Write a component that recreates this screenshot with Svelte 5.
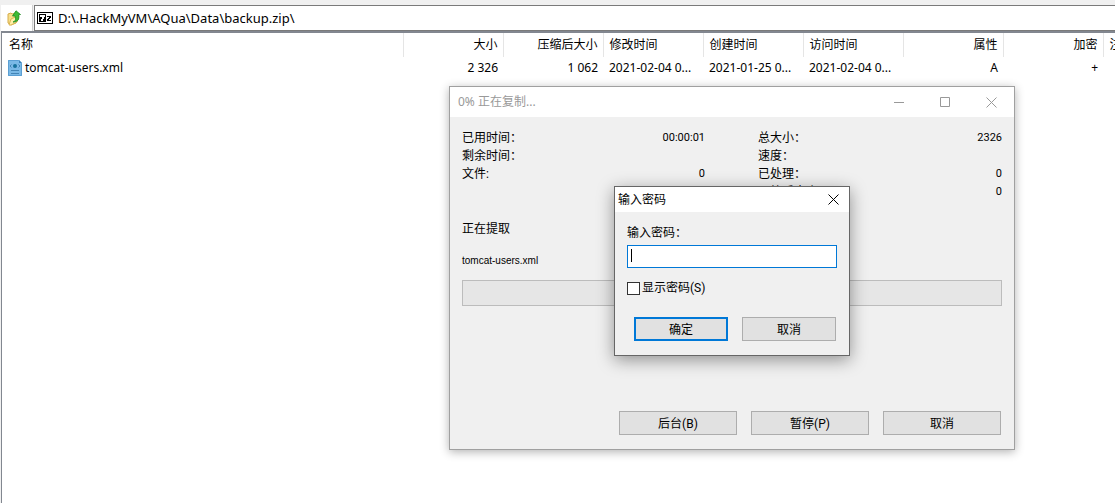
<script>
  const columns = [
    { label: '名称', value: 'tomcat-users.xml', icon: true },
    { label: '大小', value: '2 326', right: true },
    { label: '压缩后大小', value: '1 062', right: true },
    { label: '修改时间', value: '2021-02-04 0...' },
    { label: '创建时间', value: '2021-01-25 0...' },
    { label: '访问时间', value: '2021-02-04 0...' },
    { label: '属性', value: 'A', right: true },
    { label: '加密', value: '+', right: true },
    { label: '注释', value: '' }
  ];
  const left = [['已用时间：', '00:00:01'], ['剩余时间：', ''], ['文件:', '0']];
  const right = [['总大小：', '2326'], ['速度：', ''], ['已处理：', '0'], ['压缩后大小：', '0']];
  let path = $state('D:\\.HackMyVM\\AQua\\Data\\backup.zip\\');
  let password = $state('');
  let shown = $state(false);
</script>

<div class="app">
  <div class="toolbar">
    <button class="up" aria-label="Up">
      <svg width="15" height="16" viewBox="0 0 15 16">
        <path d="M1 4l3-1 1 1 4-1v10l-5 2-3-2z" fill="#f7df8b" stroke="#d6ac4a" />
        <path d="M2 15l2-6 2-1 6-2-2 6-6 3z" fill="#fff0a8" stroke="#dcb654" />
        <path d="M6 12c3-1 3-3 2-6H5.500L9 .8 13.500 4.500 11.500 5c1.200 4-.5 7-5.500 7z" fill="#3dbb35" stroke="#1c8a20" stroke-width=".8" />
      </svg>
    </button>
    <div class="address">
      <svg width="16" height="12" viewBox="0 0 16 12" shape-rendering="crispEdges">
        <path d="M0 0h16v12H0z" />
        <path d="M1 1h14v10H1z" fill="#fff" />
        <path d="M2 2h7v8H2z" />
        <path d="M3 3h5v2H7v2H6v2H4V7h1V5H3z" fill="#fff" />
        <path d="M10 4h4v2h-1v1h-1v1h2v1h-4V7h1V6h1V5h-2z" />
      </svg>
      <input aria-label="Path" bind:value={path} />
    </div>
  </div>

  <div class="list">
    <table>
      <colgroup>
        <col class="name" />
        {#each columns.slice(1) as c (c.label)}<col class="field" />{/each}
      </colgroup>
      <thead>
        <tr>{#each columns as c (c.label)}<th class:right={c.right}>{c.label}</th>{/each}</tr>
      </thead>
      <tbody>
        <tr>
          {#each columns as c (c.label)}
            <td class:right={c.right}>
              {#if c.icon}
                <span class="file">
                  <svg width="14" height="16" viewBox="0 0 14 16">
                    <path d="M0 0h11l3 3v13H0z" fill="#7ab9e6" />
                    <path d="M.5.5h10l3 3v12H.5z" fill="none" stroke="#5b9fd3" />
                    <path d="M11 0v3h3z" fill="#3a80b8" />
                    <path d="M3.500 4.500L2 6l1.500 1.500M10.500 4.500L12 6l-1.500 1.500M3 10.500h8M3 13.500h8" fill="none" stroke="#4384b5" />
                    <circle cx="7" cy="6" r="2" fill="#17729c" />
                  </svg>
                  {c.value}
                </span>
              {:else}{c.value}{/if}
            </td>
          {/each}
        </tr>
      </tbody>
    </table>
  </div>

  <section class="window progress" aria-label="正在复制">
    <header>
      <span>0% 正在复制...</span>
      <div class="controls">
        <button aria-label="Minimize"><svg width="11" height="11" viewBox="0 0 11 11"><path d="M0 5.5h10" /></svg></button>
        <button aria-label="Maximize"><svg width="11" height="11" viewBox="0 0 11 11"><path d="M.5.5h9v9h-9z" /></svg></button>
        <button aria-label="Close"><svg width="11" height="11" viewBox="0 0 11 11"><path d="M.5.5l10 10M10.5.5l-10 10" /></svg></button>
      </div>
    </header>
    <div class="body">
      <div class="stats">
        {#each [left, right] as group, i (i)}
          <dl>
            {#each group as [k, v] (k)}<div><dt>{k}</dt><dd>{v}</dd></div>{/each}
          </dl>
        {/each}
      </div>
      <p class="action">正在提取</p>
      <p class="current">tomcat-users.xml</p>
      <div class="bar" role="progressbar" aria-label="进度" aria-valuenow="0" aria-valuemin="0" aria-valuemax="100"></div>
      <div class="buttons">
        <button class="push">后台(B)</button>
        <button class="push">暂停(P)</button>
        <button class="push">取消</button>
      </div>
    </div>
  </section>

  <form class="window password" aria-label="输入密码" onsubmit={(e) => e.preventDefault()}>
    <header>
      <span>输入密码</span>
      <button type="button" class="close" aria-label="Close"><svg width="11" height="11" viewBox="0 0 11 11"><path d="M.5.5l10 10M10.5.5l-10 10" /></svg></button>
    </header>
    <div class="body">
      <label for="pw">输入密码：</label>
      <div class="entry">
        <i></i>
        <input id="pw" type={shown ? 'text' : 'password'} bind:value={password} />
      </div>
      <div class="check">
        <input id="show" type="checkbox" bind:checked={shown} />
        <label for="show">显示密码(S)</label>
      </div>
      <div class="buttons">
        <button class="push default">确定</button>
        <button type="button" class="push">取消</button>
      </div>
    </div>
  </form>
</div>

<style>
  :global(body) { margin: 0; background: #fff; }
  .app, .app * { box-sizing: border-box; }
  .app {
    position: relative;
    min-height: 100vh;
    display: flex;
    flex-direction: column;
    overflow: hidden;
    padding-top: 5px;
    background: #f0f0f0;
    color: #000;
    font: 12px/18px "Noto Sans", "Noto Sans CJK SC", sans-serif;
  }
  button, input { font: inherit; color: inherit; margin: 0; }
  button { padding: 0; }
  .toolbar { display: flex; height: 26px; margin-left: 1px; gap: 1px; }
  .up { width: 32px; padding-left: 6px; border: 0; border-right: 1px solid #d0d0d0; background: #fff; display: flex; align-items: center; }
  .address { flex: 1; display: flex; align-items: center; gap: 5px; padding-left: 2px; background: #fff; border: 1px solid #7a7a7a; border-right: 0; }
  .address input { flex: 1; min-width: 0; padding: 0; border: 0; outline: 0; background: none; font-size: 13px; }
  .list { flex: 1; margin-left: 1px; background: #fff; border: 1px solid #828790; border-width: 2px 0 0 1px; overflow: hidden; }
  table { table-layout: fixed; width: 1201px; border-collapse: collapse; }
  .name { width: 401px; }
  .field { width: 100px; }
  th, td { padding: 0 6px; font-weight: 400; text-align: left; white-space: nowrap; }
  th { height: 24px; border-right: 1px solid #e5e5e5; }
  td { height: 22px; }
  th:first-child { padding-left: 7px; }
  .right { text-align: right; padding-right: 5px; }
  .file { display: flex; align-items: center; gap: 3px; }

  .window { position: absolute; display: flex; flex-direction: column; background: #f0f0f0; font-family: Roboto, "Noto Sans CJK SC", sans-serif; }
  .window header { display: flex; align-items: center; justify-content: space-between; background: #fff; font-family: "Noto Sans", "Noto Sans CJK SC", sans-serif; }
  .window svg { display: block; fill: none; stroke: currentColor; }
  .progress { left: 449px; top: 86px; width: 566px; border: 1px solid #a0a0a0; box-shadow: 0 2px 9px rgba(0, 0, 0, .3); }
  .progress header { height: 30px; padding-left: 8px; color: #999; }
  .controls { display: flex; }
  .controls button { width: 46px; height: 30px; border: 0; background: none; display: grid; place-items: center; }
  .progress .body { padding: 12px 12px 14px; }
  .stats { display: grid; grid-template-columns: 243px 244px; justify-content: space-between; height: 91px; }
  dl, dd, p { margin: 0; }
  dl div { display: flex; justify-content: space-between; height: 18px; }
  dd { font-size: 11px; }
  .action { height: 32px; }
  .current { font-family: "Liberation Sans", sans-serif; font-size: 10px; height: 28px; }
  .bar { height: 26px; border: 1px solid #bcbcbc; background: #e6e6e6; }
  .buttons { display: flex; justify-content: flex-end; gap: 14px; }
  .progress .buttons { margin-top: 105px; padding-right: 1px; }
  .push { width: 118px; height: 24px; padding-top: 2px; border: 1px solid #adadad; background: #e1e1e1; }

  .password { left: 614px; top: 186px; width: 236px; border: 1px solid #666; box-shadow: 0 4px 16px rgba(0, 0, 0, .4); }
  .password header { height: 25px; padding: 0 10px 0 3px; }
  .close { border: 0; background: none; }
  .password .body { padding: 12px 12px 14px; display: flex; flex-direction: column; }
  .entry { display: flex; margin-top: 3px; height: 23px; padding: 3px; border: 1px solid #0078d7; background: #fff; }
  .entry i { width: 1px; height: 13px; background: #000; }
  .entry input { flex: 1; min-width: 0; border: 0; outline: 0; padding: 0; background: none; }
  .check { display: flex; align-items: center; gap: 2px; margin-top: 11px; }
  .check input { appearance: none; width: 13px; height: 13px; border: 1px solid #333; background: #fff; }
  .check input:checked { background: #0078d7; }
  .password .buttons { margin-top: 20px; padding-right: 1px; }
  .password .push { width: 94px; }
  .push.default { border: 2px solid #0078d7; }
</style>
